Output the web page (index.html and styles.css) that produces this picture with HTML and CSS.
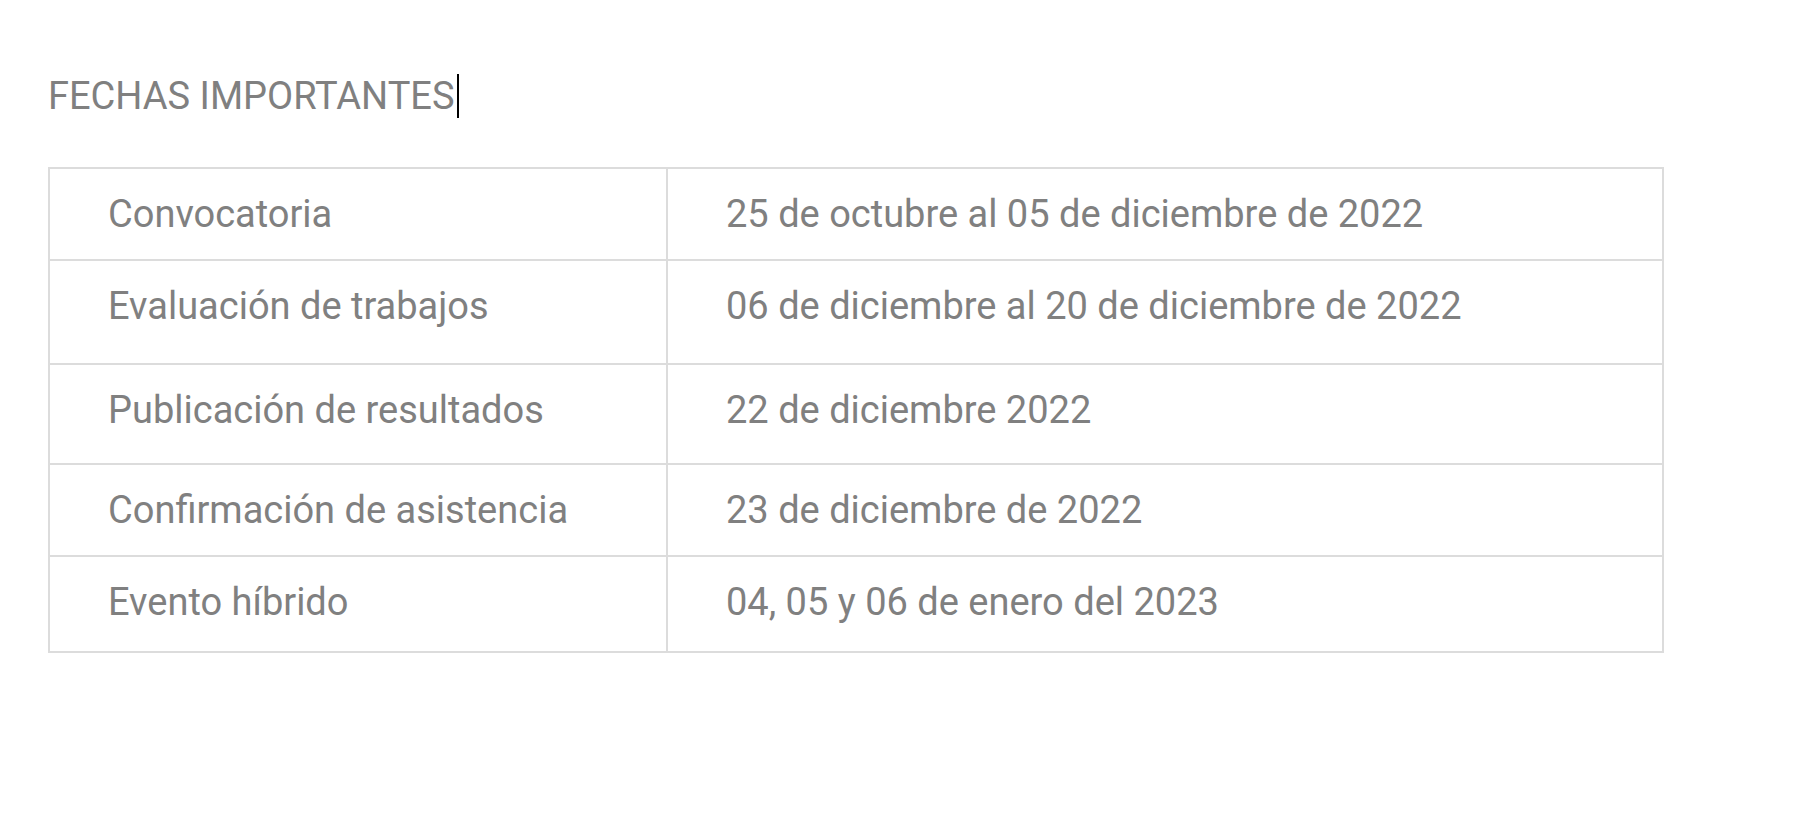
FILE: index.html
```html
<!DOCTYPE html>
<html>
<head>
    <link rel="stylesheet" href="styles.css">
</head>
<body>
    <div class="page">
        <h2 class="title">FECHAS IMPORTANTES<span class="caret"></span></h2>
        <table class="dates">
            <tr class="row-a">
                <td class="label">Convocatoria</td>
                <td>25 de octubre al 05 de diciembre de 2022</td>
            </tr>
            <tr class="row-b">
                <td class="label">Evaluación de trabajos</td>
                <td>06 de diciembre al 20 de diciembre de 2022</td>
            </tr>
            <tr class="row-c">
                <td class="label">Publicación de resultados</td>
                <td>22 de diciembre 2022</td>
            </tr>
            <tr class="row-a">
                <td class="label">Confirmación de asistencia</td>
                <td>23 de diciembre de 2022</td>
            </tr>
            <tr class="row-d">
                <td class="label">Evento híbrido</td>
                <td>04, 05 y 06 de enero del 2023</td>
            </tr>
        </table>
    </div>
</body>
</html>
```

FILE: styles.css
```css
body {
    font-family: Roboto, "Noto Sans", sans-serif;
    background-color: #fff;
    color: #808080;
    margin: 0;
    padding: 0;
}
.page {
    padding: 74px 0 0 48px;
}
.title {
    font-size: 38px;
    font-weight: normal;
    line-height: 44px;
    margin: 0 0 49px 0;
}
.caret {
    display: inline-block;
    width: 2px;
    height: 44px;
    background-color: #000;
    vertical-align: top;
    margin-left: 2px;
}
.dates {
    border-collapse: collapse;
    width: 1616px;
    font-size: 38px;
}
.dates td {
    border: 2px solid #dcdcdc;
    padding: 23px 58px 0 58px;
    line-height: 44px;
    vertical-align: top;
    white-space: nowrap;
}
.dates td.label {
    width: 500px;
}
.row-a { height: 92px; }
.row-b { height: 104px; }
.row-c { height: 100px; }
.row-d { height: 96px; }
```
